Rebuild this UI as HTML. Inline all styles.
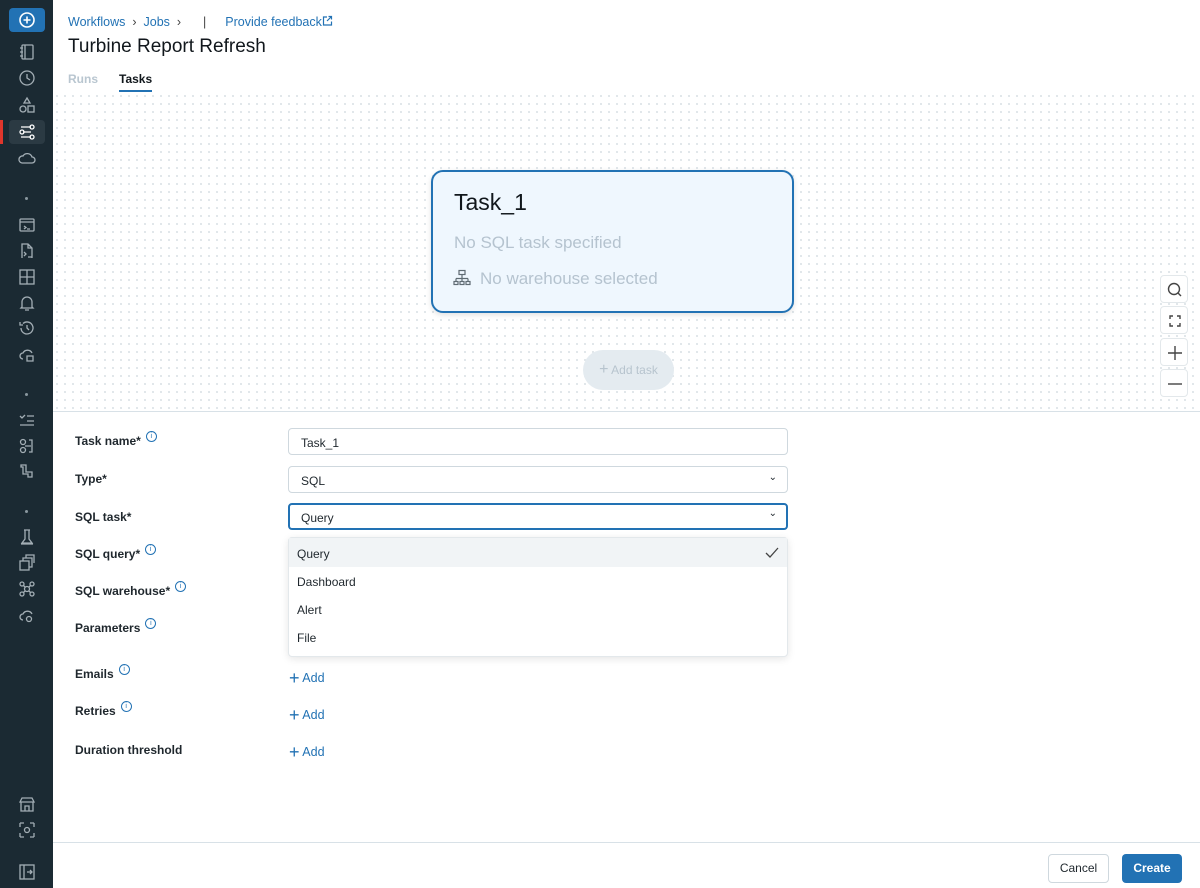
<!DOCTYPE html>
<html><head><meta charset="utf-8"><style>
*{box-sizing:border-box;margin:0;padding:0}
body{width:1200px;height:888px;font-family:"Liberation Sans",Arial,sans-serif;background:#fff;position:relative;overflow:hidden;color:#1f272d}
.sb{position:absolute;left:0;top:0;width:53px;height:888px;background:#1b2a33}
.sb .ic{position:absolute;left:17px;width:20px;height:20px}
.sb svg{stroke:#a3aeb5;fill:none;stroke-width:1.3}
.dot{position:absolute;left:25px;width:3px;height:3px;border-radius:50%;background:#8a979f}
.main{position:absolute;left:53px;top:0;right:0;bottom:0}
.bc{position:absolute;left:15px;top:15px;font-size:12.5px;color:#2272b4}
.title{position:absolute;left:15px;top:36px;font-size:19px;color:#11171c}
.tabs{position:absolute;left:15px;top:72px;font-size:12px;font-weight:bold}
.canvas{position:absolute;left:0;top:92px;width:1147px;height:320px;background-color:#fff;background-image:radial-gradient(#dfe5e9 1px,transparent 1.2px);background-size:8px 8px;border-bottom:1px solid #d8e1e7}
.card{position:absolute;left:378px;top:78px;width:363px;height:143px;border:2px solid #2272b4;border-radius:12px;background:#eff7fe;box-shadow:0 2px 6px rgba(0,0,0,.12)}
.ctl{position:absolute;left:1107px;width:28px;height:28px;background:#fff;border:1px solid #e3e8eb;border-radius:4px}
.lbl{position:absolute;left:22px;font-size:12px;font-weight:bold;color:#1f272d}
.info{display:inline-block;width:11px;height:11px;border:1px solid #2272b4;border-radius:50%;font-size:7px;color:#2272b4;text-align:center;line-height:9px;vertical-align:top;margin-left:5px;margin-top:-3px;font-weight:normal}
.inp{position:absolute;left:235px;width:500px;height:27px;border:1px solid #cfd8de;border-radius:4px;font-size:12px;padding:7px 12px}
.add{position:absolute;left:236px;font-size:12.5px;color:#2272b4}
</style></head><body>
<div class="sb">
<div style="position:absolute;left:9px;top:8px;width:36px;height:24px;background:#2272b4;border-radius:4px"><svg width="36" height="24" style="stroke:#fff;stroke-width:1.6"><circle cx="18" cy="12" r="7"/><path d="M18 8.5v7M14.5 12h7"/></svg></div>
<svg class="ic" style="top:42px"><rect x="5" y="3" width="11" height="14" rx="1"/><path d="M8 3v14M3 6h3M3 10h3M3 14h3"/></svg>
<svg class="ic" style="top:68px"><circle cx="10" cy="10" r="7"/><path d="M10 6v4l3 2"/></svg>
<svg class="ic" style="top:95px"><path d="M10 3l3 5H7z"/><circle cx="6" cy="14" r="3"/><rect x="11" y="11" width="6" height="6"/></svg>
<div style="position:absolute;left:0;top:120px;width:3px;height:24px;background:#e0362c"></div>
<div style="position:absolute;left:9px;top:120px;width:36px;height:24px;background:#2b3a43;border-radius:4px"></div>
<svg class="ic" style="top:122px;stroke:#fff"><path d="M4 5h10M6 10h8M4 15h10"/><circle cx="15" cy="5" r="2"/><circle cx="5" cy="10" r="2"/><circle cx="15" cy="15" r="2"/></svg>
<svg class="ic" style="top:148px"><path d="M5 15h10a3 3 0 0 0 0-6 5 5 0 0 0-9-1 3.5 3.5 0 0 0-1 7z"/></svg>
<div class="dot" style="top:197px"></div>
<svg class="ic" style="top:215px"><rect x="3" y="4" width="14" height="12" rx="1"/><path d="M3 7h14M7 11l2 1.5-2 1.5M10 14h3"/></svg>
<svg class="ic" style="top:241px"><path d="M5 17V3h6l4 4v10M11 3v4h4M7 11l2 2-2 2M11 16h4"/></svg>
<svg class="ic" style="top:267px"><rect x="3" y="3" width="14" height="14"/><path d="M3 10h14M10 3v14"/></svg>
<svg class="ic" style="top:293px"><path d="M5 14V9a5 5 0 0 1 10 0v5l1 1H4zM8 17h4"/></svg>
<svg class="ic" style="top:318px"><path d="M4 10a6 6 0 1 0 2-4.5M3 4v3h3M10 7v3l2 2"/></svg>
<svg class="ic" style="top:344px"><path d="M6 15a3 3 0 0 1 0-6 5 5 0 0 1 9 0M10 12h6v5h-6z"/></svg>
<div class="dot" style="top:393px"></div>
<svg class="ic" style="top:410px"><path d="M3 6l2 2 3-3M10 6h7M10 11h7M3 15h14"/></svg>
<svg class="ic" style="top:436px"><circle cx="6" cy="6" r="2.5"/><circle cx="6" cy="14" r="2.5"/><path d="M12 4h3v12h-3M8 10h6"/></svg>
<svg class="ic" style="top:461px"><path d="M4 4h5v7h6v5h-4v-3H6V6H4z"/></svg>
<div class="dot" style="top:510px"></div>
<svg class="ic" style="top:527px"><path d="M7 3h6M8 3v9l-3 4h10l-3-4V3M4 17h12"/></svg>
<svg class="ic" style="top:553px"><rect x="3" y="8" width="9" height="9"/><path d="M6 8V5h9v9h-3M9 5V2h8v8"/></svg>
<svg class="ic" style="top:579px"><circle cx="5" cy="5" r="2"/><circle cx="15" cy="5" r="2"/><circle cx="5" cy="15" r="2"/><circle cx="15" cy="15" r="2"/><circle cx="10" cy="10" r="2.5"/><path d="M6.5 6.5l2 2M13.5 6.5l-2 2M6.5 13.5l2-2M13.5 13.5l-2-2"/></svg>
<svg class="ic" style="top:605px"><path d="M6 15a3 3 0 0 1 0-6 5 5 0 0 1 9 0"/><circle cx="12" cy="14" r="2.5"/></svg>
<svg class="ic" style="top:794px"><path d="M3 8l2-4h10l2 4zM4 8v9h12V8M8 17v-5h4v5"/></svg>
<svg class="ic" style="top:820px"><path d="M3 3h4M3 3v4M17 3h-4M17 3v4M3 17h4M3 17v-4M17 17h-4M17 17v-4"/><circle cx="10" cy="10" r="2.5"/></svg>
<svg class="ic" style="top:862px"><rect x="3" y="3" width="14" height="14"/><path d="M7 3v14M10 10h5M13 8l2 2-2 2"/></svg>
</div>
<div class="main">
<div class="bc">Workflows &nbsp;<span style="color:#444">›</span>&nbsp; Jobs &nbsp;<span style="color:#444">›</span><span style="margin-left:22px;color:#444">|</span><span style="margin-left:19px">Provide feedback<svg width="11" height="11" style="stroke:#2272b4;fill:none;stroke-width:1.2;vertical-align:top"><path d="M5 2H1.5v8h8V6.5M6.5 1.5h3v3M9.5 1.5L5 6"/></svg></span></div>
<div class="title">Turbine Report Refresh</div>
<div class="tabs"><span style="color:#b9c6d0">Runs</span><span style="margin-left:21px;color:#11171c;display:inline-block;border-bottom:3px solid #2272b4;padding-bottom:4px">Tasks</span></div>
<div class="canvas">
<div class="card">
<div style="position:absolute;left:21px;top:17px;font-size:23px;color:#11171c">Task_1</div>
<div style="position:absolute;left:21px;top:61px;font-size:17px;color:#b5c3cf">No SQL task specified</div>
<svg width="18" height="18" style="position:absolute;left:20px;top:97px;stroke:#5f6b73;fill:none;stroke-width:1.2"><rect x="6" y="1.5" width="6" height="4"/><path d="M9 5.5v4M3 9.5h12M3 9.5v3M9 9.5v3M15 9.5v3"/><rect x="1" y="12.5" width="4" height="3"/><rect x="7" y="12.5" width="4" height="3"/><rect x="13" y="12.5" width="4" height="3"/></svg>
<div style="position:absolute;left:47px;top:97px;font-size:17px;color:#b5c3cf">No warehouse selected</div>
</div>
<div style="position:absolute;left:530px;top:258px;width:91px;height:40px;border-radius:20px;background:#e4ebf0;color:#b7c4ce;font-size:12px;text-align:center;line-height:40px"><span style="font-size:16px">+</span> Add task</div>
<div class="ctl" style="top:183px"><svg width="28" height="28" style="stroke:#444;fill:none;stroke-width:1.4"><circle cx="13" cy="13" r="5.5"/><path d="M17 17l3 3"/></svg></div>
<div class="ctl" style="top:214px"><svg width="28" height="28" style="stroke:#444;fill:none;stroke-width:1.4"><path d="M9 12V9h3M16 9h3v3M19 16v3h-3M12 19H9v-3"/></svg></div>
<div class="ctl" style="top:246px"><svg width="28" height="28" style="stroke:#444;fill:none;stroke-width:1.4"><path d="M14 7v14M7 14h14"/></svg></div>
<div class="ctl" style="top:277px"><svg width="28" height="28" style="stroke:#444;fill:none;stroke-width:1.4"><path d="M7 14h14"/></svg></div>
</div>
<div class="lbl" style="top:434px">Task name*<span class="info">i</span></div>
<div class="lbl" style="top:472px">Type*</div>
<div class="lbl" style="top:510px">SQL task*</div>
<div class="lbl" style="top:547px">SQL query*<span class="info">i</span></div>
<div class="lbl" style="top:584px">SQL warehouse*<span class="info">i</span></div>
<div class="lbl" style="top:621px">Parameters<span class="info">i</span></div>
<div class="lbl" style="top:667px">Emails<span class="info">i</span></div>
<div class="lbl" style="top:704px">Retries<span class="info">i</span></div>
<div class="lbl" style="top:743px">Duration threshold</div>
<div class="inp" style="top:428px">Task_1</div>
<div class="inp" style="top:466px">SQL<span style="position:absolute;right:10px;top:5px;font-size:10px">&#8964;</span></div>
<div class="inp" style="top:503px;border:2px solid #2272b4;padding:6px 11px">Query<span style="position:absolute;right:9px;top:3px;font-size:10px">&#8964;</span></div>
<div style="position:absolute;left:235px;top:537px;width:500px;height:120px;background:#fff;border:1px solid #e3e8eb;border-radius:4px;box-shadow:0 2px 8px rgba(0,0,0,.1);font-size:12px">
<div style="height:29px;background:#f1f4f6;padding:9px 8px">Query<svg width="14" height="12" style="position:absolute;right:8px;top:9px;stroke:#444;fill:none;stroke-width:1.3"><path d="M1 6l4 4 8-9"/></svg></div>
<div style="height:28px;padding:8px">Dashboard</div>
<div style="height:28px;padding:8px">Alert</div>
<div style="height:28px;padding:8px">File</div>
</div>
<div class="add" style="top:668px"><span style="font-size:18px;vertical-align:-2px">+</span> Add</div>
<div class="add" style="top:705px"><span style="font-size:18px;vertical-align:-2px">+</span> Add</div>
<div class="add" style="top:742px"><span style="font-size:18px;vertical-align:-2px">+</span> Add</div>
<div style="position:absolute;left:0;right:0;top:842px;border-top:1px solid #d8e1e7"></div>
<div style="position:absolute;left:995px;top:854px;width:61px;height:29px;border:1px solid #cfd8de;border-radius:4px;font-size:12px;text-align:center;line-height:27px">Cancel</div>
<div style="position:absolute;left:1069px;top:854px;width:60px;height:29px;background:#2272b4;border-radius:4px;font-size:12px;color:#fff;font-weight:bold;text-align:center;line-height:29px">Create</div>
</div>
</body></html>
